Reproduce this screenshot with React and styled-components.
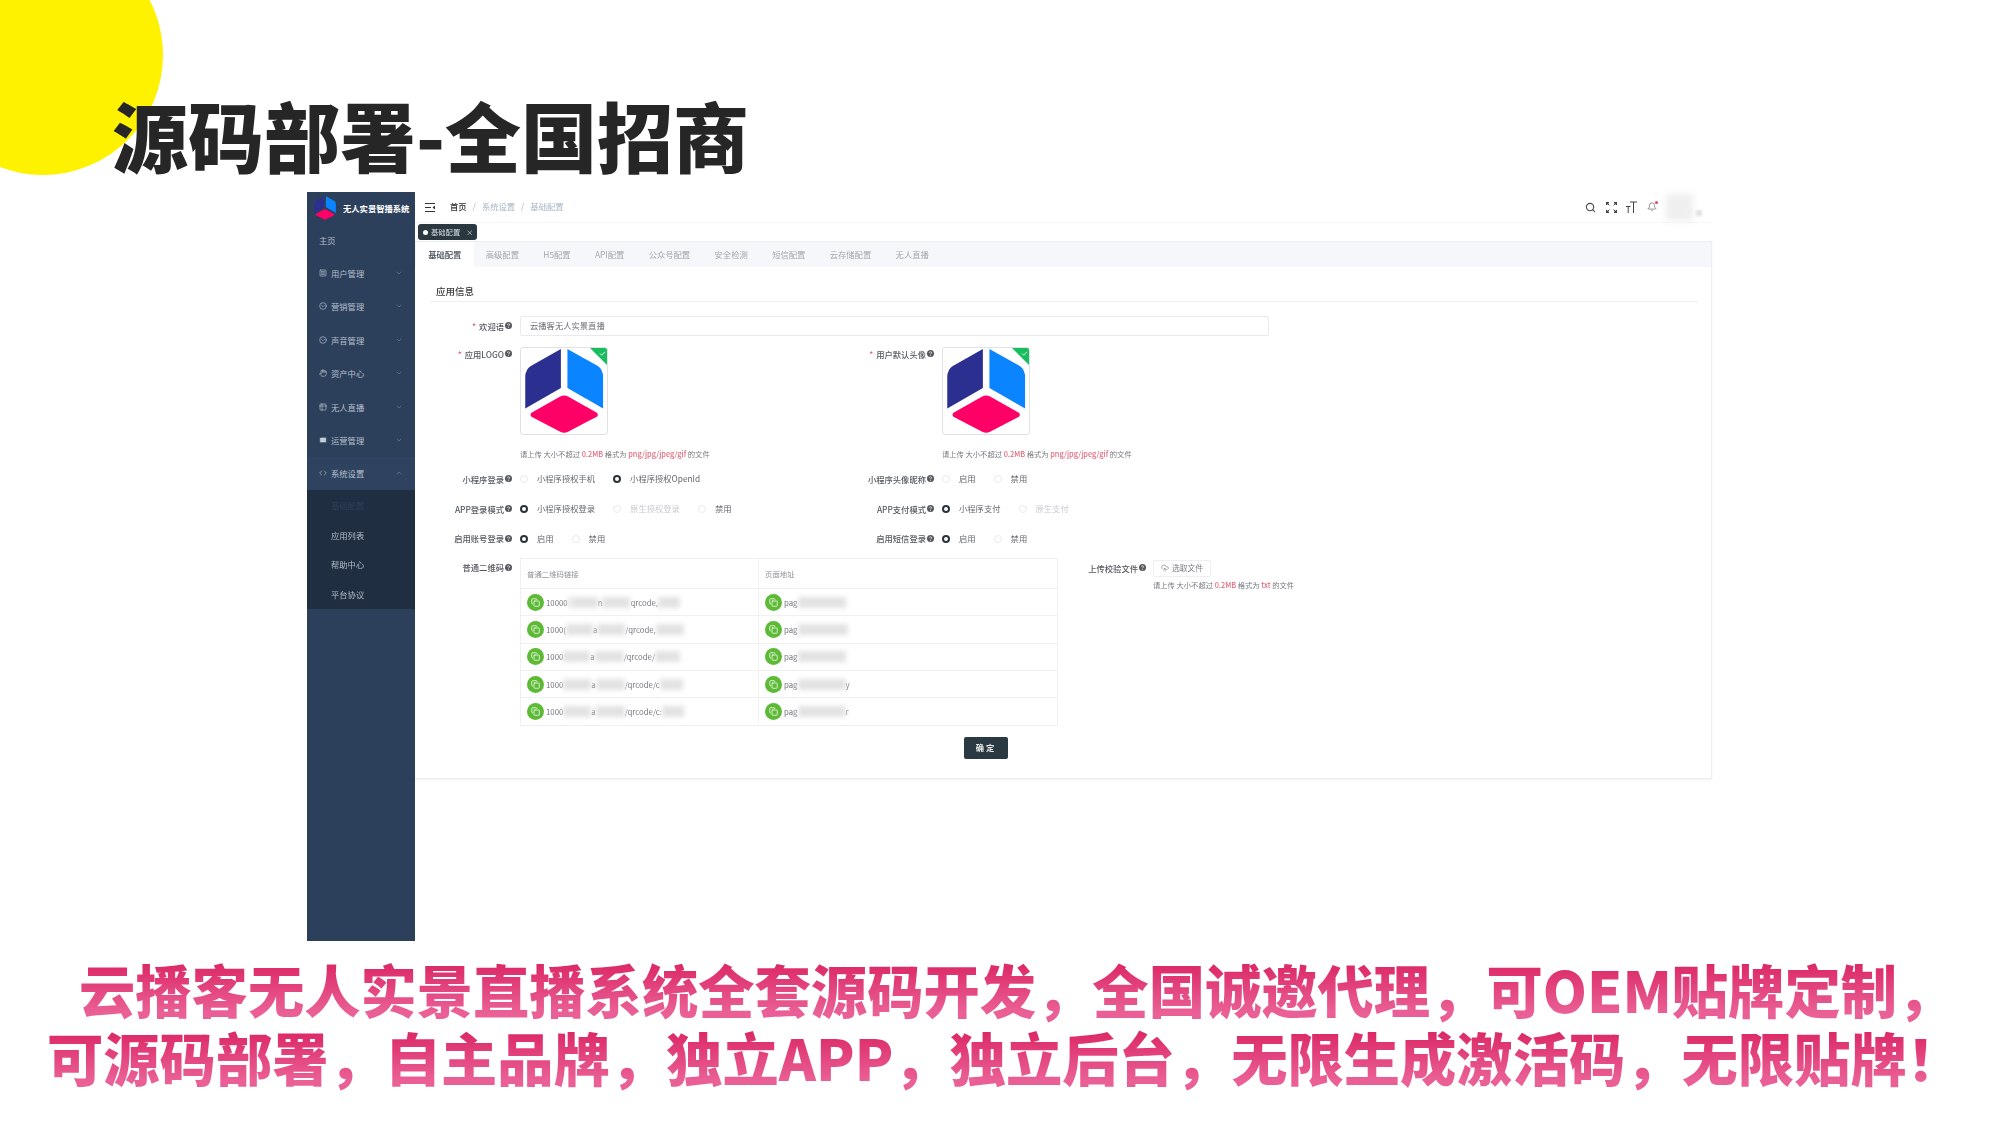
import React from 'react';
import styled, { createGlobalStyle } from 'styled-components';
import { Search, Bell, ChevronDown, ChevronUp, SquareMenu, CircleChevronDown, Hand, Table2, Mail, Code, UploadCloud, Copy } from 'lucide-react';

const GlobalStyle = createGlobalStyle`
  html, body { margin: 0; padding: 0; background: #fff; }
  * { box-sizing: border-box; }
  body { font-family: "Noto Sans CJK SC", "Noto Sans", sans-serif; }
`;

const Page = styled.div`
  position: relative;
  width: 2000px;
  height: 1125px;
  overflow: hidden;
  background: #fff;
`;

const YellowCircle = styled.div`
  position: absolute;
  left: -77px;
  top: -65px;
  width: 240px;
  height: 240px;
  border-radius: 50%;
  background: #fff200;
`;

const Title = styled.h1`
  position: relative;
  margin: 0 0 10px;
  padding: 86px 0 0 112px;
  font-size: 76px;
  line-height: 96px;
  font-weight: 900;
  color: #262626;
  white-space: nowrap;
`;

const AppFrame = styled.div`
  display: flex;
  width: 1405px;
  height: 749px;
  margin-left: 307px;
  filter: blur(0.45px);
`;

const Sidebar = styled.aside`
  width: 108px;
  flex: none;
  background: #2d405b;
  color: #b4bfcc;
  font-size: 8.3px;
`;

const Brand = styled.div`
  display: flex;
  align-items: center;
  height: 31px;
  padding-left: 6px;
  gap: 6px;
  color: #fff;
  font-weight: 700;
  white-space: nowrap;
`;

const MenuRow = styled.div`
  display: flex;
  align-items: center;
  height: 33.4px;
  padding: 0 12px;
  gap: 4px;
  background: ${(p) => (p.$open ? '#2f4360' : 'transparent')};
  svg { flex: none; }
`;

const MenuText = styled.span`
  flex: 1;
`;

const Submenu = styled.div`
  background: #1f2e40;
`;

const SubItem = styled.div`
  display: flex;
  align-items: center;
  height: 29.7px;
  padding-left: 24px;
  color: ${(p) => (p.$active ? '#2f4258' : '#b4bfcc')};
`;

const Main = styled.main`
  flex: 1;
  height: 587px;
  display: flex;
  flex-direction: column;
  min-width: 0;
`;

const TopBar = styled.header`
  display: flex;
  align-items: center;
  height: 31px;
  flex: none;
  padding: 0 10px 0 10px;
  border-bottom: 1px solid #f6f6f6;
  font-size: 8.3px;
`;

const Crumbs = styled.div`
  display: flex;
  align-items: center;
  gap: 6px;
  margin-left: 15px;
  padding-bottom: 2px;
  color: #a9b5c6;
`;

const Crumb = styled.span`
  color: ${(p) => (p.$home ? '#303133' : '#a9b5c6')};
  font-weight: ${(p) => (p.$home ? 500 : 400)};
`;

const TopActions = styled.div`
  display: flex;
  align-items: center;
  margin-left: auto;
  gap: 9.5px;
  color: #4a4a4a;
`;

const BellWrap = styled.span`
  position: relative;
  display: flex;
`;

const BellDot = styled.i`
  position: absolute;
  top: -1px;
  right: -1px;
  width: 3px;
  height: 3px;
  border-radius: 50%;
  background: #e8445a;
`;

const AvatarGroup = styled.div`
  display: flex;
  align-items: flex-end;
  gap: 3px;
  width: 36px;
`;

const AvatarBlur = styled.div`
  width: 27px;
  height: 27px;
  background: #efefef;
  filter: blur(3px);
`;

const AvatarCaret = styled.div`
  width: 6px;
  height: 6px;
  margin-bottom: 5px;
  background: #e2e2e2;
  filter: blur(1px);
`;

const TagBar = styled.div`
  display: flex;
  align-items: center;
  height: 18px;
  flex: none;
  padding-left: 3px;
`;

const Tag = styled.div`
  display: flex;
  align-items: center;
  width: 59px;
  height: 16px;
  padding-left: 5px;
  gap: 3px;
  border-radius: 3px;
  background: #2b3840;
  color: #d8dcdf;
  font-size: 7.3px;
`;

const TagDot = styled.i`
  width: 5px;
  height: 5px;
  border-radius: 50%;
  background: #fff;
`;

const TagClose = styled.span`
  margin-left: 3px;
  font-size: 7px;
`;

const Card = styled.section`
  flex: 1;
  border: 1px solid #eceef1;
  border-left: none;
  box-shadow: 0 1px 2px rgba(0, 0, 0, 0.06);
`;

const Tabs = styled.nav`
  display: flex;
  height: 25px;
  background: #f5f7fa;
`;

const TabItem = styled.div`
  display: flex;
  align-items: center;
  padding: 0 12.2px 2px;
  margin-left: ${(p) => (p.$first ? '1px' : '0')};
  font-size: 8.3px;
  background: ${(p) => (p.$active ? '#fff' : 'transparent')};
  color: ${(p) => (p.$active ? '#444b55' : '#a3a6ad')};
  font-weight: ${(p) => (p.$active ? 500 : 400)};
`;

const FormBody = styled.div`
  padding: 17px 13px 0 15px;
`;

const SectionTitle = styled.div`
  height: 18px;
  padding-left: 6px;
  border-bottom: 1px solid #eff0f2;
  color: #3a3a3a;
  font-size: 9.5px;
  line-height: 14px;
  font-weight: 500;
`;

const Field = styled.div`
  display: flex;
  gap: ${(p) => p.$gap || 8}px;
  align-items: ${(p) => (p.$center ? 'center' : 'flex-start')};
`;

const WelcomeField = styled(Field)`
  margin-top: 14px;
`;

const Label = styled.div`
  display: flex;
  align-items: center;
  justify-content: flex-end;
  flex: none;
  gap: 1px;
  width: ${(p) => p.$w || 82}px;
  height: ${(p) => p.$h || 14}px;
  padding-bottom: 1px;
  color: #555a60;
  font-size: 8.3px;
  font-weight: 500;
  white-space: nowrap;
`;

const Required = styled.span`
  color: #e8607a;
  margin-right: 2px;
`;

const WelcomeInput = styled.div`
  display: flex;
  align-items: center;
  width: 749px;
  height: 20px;
  padding: 0 0 2px 9px;
  border: 1px solid #e9eaec;
  border-radius: 2px;
  color: #6a6d72;
  font-size: 8.3px;
`;

const Columns = styled.div`
  display: grid;
  grid-template-columns: 422px 1fr;
  margin-top: ${(p) => p.$top || 0}px;
`;

const UploadBox = styled.div`
  position: relative;
  width: 88px;
  height: 88px;
  overflow: hidden;
  border: 1px solid #dfe1e5;
  border-radius: 3px;
  background: #fff;
`;

const Corner = styled.div`
  position: absolute;
  top: 0;
  right: 0;
  width: 17px;
  height: 17px;
  clip-path: polygon(0 0, 100% 0, 100% 100%);
  background: #18bd60;
  color: #fff;
  svg { position: absolute; top: 2px; right: 1px; }
`;

const Hint = styled.div`
  margin-top: 13px;
  height: 12px;
  line-height: 12px;
  color: #777a80;
  font-size: 7.3px;
  white-space: nowrap;
`;

const Em = styled.span`
  color: #e46b7d;
  font-weight: 500;
`;

const RadioRow = styled.div`
  display: flex;
  align-items: center;
  height: 14px;
  gap: 18px;
`;

const RadioItem = styled.div`
  display: flex;
  align-items: center;
  gap: 9px;
  color: ${(p) => (p.$disabled ? '#c9cbd0' : '#63676d')};
  font-size: 8.3px;
  white-space: nowrap;
`;

const RadioText = styled.span`
  padding-bottom: 2px;
`;

const RadioDot = styled.i`
  display: block;
  width: 8px;
  height: 8px;
  border-radius: 50%;
  border: ${(p) => (p.$on ? '2.5px solid #2b3238' : '1px solid #e8e9eb')};
  background: #fff;
`;

const LastRow = styled.div`
  display: flex;
  margin-top: 12px;
`;

const QrTable = styled.div`
  width: 538px;
  border: 1px solid #f0f0f2;
  font-size: 7.8px;
  color: #73767b;
`;

const QrHead = styled.div`
  display: grid;
  grid-template-columns: 237px 1fr;
  height: 29.5px;
  color: #8f9297;
  font-size: 7.4px;
`;

const QrRow = styled.div`
  display: grid;
  grid-template-columns: 237px 1fr;
  height: 27.3px;
  border-top: 1px solid #f0f0f2;
`;

const QrCell = styled.div`
  display: flex;
  align-items: center;
  padding-left: 6px;
  & + & { border-left: 1px solid #f3f3f5; }
`;

const QrIcon = styled.span`
  display: flex;
  align-items: center;
  justify-content: center;
  flex: none;
  width: 17px;
  height: 17px;
  margin-right: 2px;
  border-radius: 50%;
  background: #5dba36;
  color: #fff;
`;

const Redact = styled.span`
  display: inline-block;
  flex: none;
  height: 11px;
  width: ${(p) => p.$w}px;
  background: #e2e2e2;
  filter: blur(2.5px);
`;

const UploadCol = styled.div`
  margin-top: 2px;
`;

const PickButton = styled.div`
  display: flex;
  align-items: center;
  justify-content: center;
  gap: 3px;
  width: 58px;
  height: 17px;
  padding-bottom: 1px;
  border: 1px solid #eeeff1;
  border-radius: 2px;
  color: #777a80;
  font-size: 7.8px;
`;

const SmallHint = styled(Hint)`
  margin-top: 2px;
`;

const ButtonRow = styled.div`
  margin-top: 11px;
  padding-left: 534px;
`;

const SaveButton = styled.button`
  display: block;
  width: 44px;
  height: 22px;
  padding: 0 0 2px;
  border: none;
  border-radius: 2px;
  background: #2b3a42;
  color: #e8ecee;
  font-family: inherit;
  font-size: 8.3px;
  font-weight: 700;
  letter-spacing: 2px;
`;

const Caption = styled.div`
  margin-top: 14px;
  font-size: 56.3px;
  line-height: 68px;
  font-weight: 900;
  white-space: nowrap;
`;

const CaptionLine = styled.div`
  height: 68px;
  padding-left: ${(p) => p.$left}px;
  span {
    display: inline-block;
    height: 68px;
    background: linear-gradient(180deg, #dc2a68 15%, #ea6096 85%);
    -webkit-background-clip: text;
    background-clip: text;
    color: transparent;
  }
`;

const LogoMark = ({ size }) => (
  <svg width={size} height={size} viewBox="0 0 263 263">
    <path d="M122 3 L30 55 Q13 65 13 90 L13 185 L122 122 Z" fill="#2b2f8f" />
    <path d="M142 3 L235 55 Q251 65 251 90 L251 185 L142 122 Z" fill="#0a84ff" />
    <path d="M120 148 Q132 142 144 148 L232 198 Q238 205 232 210 L144 256 Q132 263 120 256 L32 210 Q26 205 32 198 Z" fill="#ff0066" />
  </svg>
);

const Collapse = () => (
  <svg width="10" height="9" viewBox="0 0 10 9" fill="none" stroke="#333" strokeWidth="1">
    <path d="M0 .5H10M0 4.5H6M0 8.5H10" />
    <path d="M10 2.5V6.5L7.5 4.5Z" fill="#333" stroke="none" />
  </svg>
);

// corners point outwards and sit apart, as in the reference
const FullScreen = () => (
  <svg width="11" height="11" viewBox="0 0 11 11" fill="none" stroke="#444" strokeWidth="1.4">
    <path d="M.7 3V.7H3M8 .7H10.3V3M10.3 8V10.3H8M3 10.3H.7V8" />
    <path d="M.7 .7L3.4 3.4M10.3 .7L7.6 3.4M10.3 10.3L7.6 7.6M.7 10.3L3.4 7.6" strokeWidth="1" />
  </svg>
);

const TextSize = () => (
  <svg width="11" height="12" viewBox="0 0 11 12" fill="none" stroke="#444" strokeWidth="1">
    <path d="M4 1H11M7.5 1V12M0 5.5H4.5M2.2 5.5V12" />
  </svg>
);

const Help = () => (
  <svg width="7" height="7" viewBox="0 0 10 10">
    <circle cx="5" cy="5" r="5" fill="#55595e" />
    <path d="M3.3 3.9C3.4 2.2 6.7 2.2 6.7 3.9C6.7 5.1 5 5 5 6.3" fill="none" stroke="#fff" strokeWidth="1.1" />
    <circle cx="5" cy="7.8" r=".7" fill="#fff" />
  </svg>
);

const Radios = ({ items }) => (
  <RadioRow>
    {items.map((it) => (
      <RadioItem key={it.text} $disabled={it.disabled}>
        <RadioDot $on={it.on} />
        <RadioText>{it.text}</RadioText>
      </RadioItem>
    ))}
  </RadioRow>
);

const FormLabel = ({ text, required, w, h }) => (
  <Label $w={w} $h={h}>
    {required && <Required>*</Required>}
    {text}
    <Help />
  </Label>
);

const UploadedLogo = () => (
  <UploadBox>
    <LogoMark size={86} />
    <Corner>
      <svg width="7" height="7" viewBox="0 0 10 10" fill="none" stroke="#fff" strokeWidth="1.2">
        <path d="M1.5 5 L4 7.5 L8.5 2.5" />
      </svg>
    </Corner>
  </UploadBox>
);

const menus = [
  { text: '用户管理', icon: <SquareMenu size={8} /> },
  { text: '营销管理', icon: <CircleChevronDown size={8} /> },
  { text: '声音管理', icon: <CircleChevronDown size={8} /> },
  { text: '资产中心', icon: <Hand size={8} /> },
  { text: '无人直播', icon: <Table2 size={8} /> },
  { text: '运营管理', icon: <Mail size={8} fill="#c5ced8" color="#2d405b" /> },
];

const tabs = ['基础配置', '高级配置', 'H5配置', 'API配置', '公众号配置', '安全检测', '短信配置', '云存储配置', '无人直播'];

// each row of the QR table: text pieces and the blurred-out stretches between them
const qrRows = [
  { link: ['10000', 4, 26, 'n', 28, 'qrcode,', 22], page: [48] },
  { link: ['1000(', 27, 'a', 28, '/qrcode,', 28], page: [50] },
  { link: ['1000', 27, 'a', 29, '/qrcode/', 25], page: [48] },
  { link: ['1000', 28, 'a', 29, '/qrcode/c', 23], page: [48, 'y'] },
  { link: ['1000', 28, 'a', 29, '/qrcode/c:', 22], page: [48, 'r'] },
];

const Pieces = ({ parts }) =>
  parts.map((p, i) => (typeof p === 'number' ? <Redact key={i} $w={p} /> : <span key={i}>{p}</span>));

export default function App() {
  return (
    <Page>
      <GlobalStyle />
      <YellowCircle />
      <Title>源码部署-全国招商</Title>
      <AppFrame>
        <Sidebar>
          <Brand>
            <LogoMark size={24} />
            无人实景智播系统
          </Brand>
          <MenuRow>主页</MenuRow>
          {menus.map((m) => (
            <MenuRow key={m.text}>
              {m.icon}
              <MenuText>{m.text}</MenuText>
              <ChevronDown size={8} color="#6f7f93" />
            </MenuRow>
          ))}
          <MenuRow $open>
            <Code size={8} />
            <MenuText>系统设置</MenuText>
            <ChevronUp size={8} color="#6f7f93" />
          </MenuRow>
          <Submenu>
            <SubItem $active>基础配置</SubItem>
            <SubItem>应用列表</SubItem>
            <SubItem>帮助中心</SubItem>
            <SubItem>平台协议</SubItem>
          </Submenu>
        </Sidebar>
        <Main>
          <TopBar>
            <Collapse />
            <Crumbs>
              <Crumb $home>首页</Crumb>/<Crumb>系统设置</Crumb>/<Crumb>基础配置</Crumb>
            </Crumbs>
            <TopActions>
              <Search size={11} strokeWidth={2.4} />
              <FullScreen />
              <TextSize />
              <BellWrap>
                <Bell size={10} strokeWidth={1.4} />
                <BellDot />
              </BellWrap>
              <AvatarGroup>
                <AvatarBlur />
                <AvatarCaret />
              </AvatarGroup>
            </TopActions>
          </TopBar>
          <TagBar>
            <Tag>
              <TagDot />
              基础配置
              <TagClose>×</TagClose>
            </Tag>
          </TagBar>
          <Card>
            <Tabs>
              {tabs.map((t, i) => (
                <TabItem key={t} $active={i === 0} $first={i === 0}>
                  {t}
                </TabItem>
              ))}
            </Tabs>
            <FormBody>
              <SectionTitle>应用信息</SectionTitle>
              <WelcomeField>
                <FormLabel text="欢迎语" required h={20} />
                <WelcomeInput>云播客无人实景直播</WelcomeInput>
              </WelcomeField>
              <Columns $top={11}>
                <Field>
                  <FormLabel text="应用LOGO" required />
                  <div>
                    <UploadedLogo />
                    <Hint>
                      请上传 大小不超过 <Em>0.2MB</Em> 格式为 <Em>png/jpg/jpeg/gif</Em> 的文件
                    </Hint>
                  </div>
                </Field>
                <Field>
                  <FormLabel text="用户默认头像" required />
                  <div>
                    <UploadedLogo />
                    <Hint>
                      请上传 大小不超过 <Em>0.2MB</Em> 格式为 <Em>png/jpg/jpeg/gif</Em> 的文件
                    </Hint>
                  </div>
                </Field>
              </Columns>
              <Columns $top={12}>
                <Field $center>
                  <FormLabel text="小程序登录" />
                  <Radios items={[{ text: '小程序授权手机' }, { text: '小程序授权OpenId', on: true }]} />
                </Field>
                <Field $center>
                  <FormLabel text="小程序头像昵称" />
                  <Radios items={[{ text: '启用' }, { text: '禁用' }]} />
                </Field>
              </Columns>
              <Columns $top={16}>
                <Field $center>
                  <FormLabel text="APP登录模式" />
                  <Radios items={[{ text: '小程序授权登录', on: true }, { text: '原生授权登录', disabled: true }, { text: '禁用' }]} />
                </Field>
                <Field $center>
                  <FormLabel text="APP支付模式" />
                  <Radios items={[{ text: '小程序支付', on: true }, { text: '原生支付', disabled: true }]} />
                </Field>
              </Columns>
              <Columns $top={15.7}>
                <Field $center>
                  <FormLabel text="启用账号登录" />
                  <Radios items={[{ text: '启用', on: true }, { text: '禁用' }]} />
                </Field>
                <Field $center>
                  <FormLabel text="启用短信登录" />
                  <Radios items={[{ text: '启用', on: true }, { text: '禁用' }]} />
                </Field>
              </Columns>
              <LastRow>
                <Field>
                  <FormLabel text="普通二维码" h={20} />
                  <QrTable>
                    <QrHead>
                      <QrCell>普通二维码链接</QrCell>
                      <QrCell>页面地址</QrCell>
                    </QrHead>
                    {qrRows.map((row, i) => (
                      <QrRow key={i}>
                        <QrCell>
                          <QrIcon><Copy size={9} /></QrIcon>
                          <Pieces parts={row.link} />
                        </QrCell>
                        <QrCell>
                          <QrIcon><Copy size={9} /></QrIcon>
                          pag
                          <Pieces parts={row.page} />
                        </QrCell>
                      </QrRow>
                    ))}
                  </QrTable>
                </Field>
                <UploadCol>
                  <Field $gap={7}>
                    <FormLabel text="上传校验文件" w={88} h={17} />
                    <div>
                      <PickButton>
                        <UploadCloud size={8} />
                        选取文件
                      </PickButton>
                      <SmallHint>
                        请上传 大小不超过 <Em>0.2MB</Em> 格式为 <Em>txt</Em> 的文件
                      </SmallHint>
                    </div>
                  </Field>
                </UploadCol>
              </LastRow>
              <ButtonRow>
                <SaveButton>确定</SaveButton>
              </ButtonRow>
            </FormBody>
          </Card>
        </Main>
      </AppFrame>
      <Caption>
        <CaptionLine $left={79}><span>云播客无人实景直播系统全套源码开发，全国诚邀代理，可OEM贴牌定制，</span></CaptionLine>
        <CaptionLine $left={47}><span>可源码部署，自主品牌，独立APP，独立后台，无限生成激活码，无限贴牌！</span></CaptionLine>
      </Caption>
    </Page>
  );
}
